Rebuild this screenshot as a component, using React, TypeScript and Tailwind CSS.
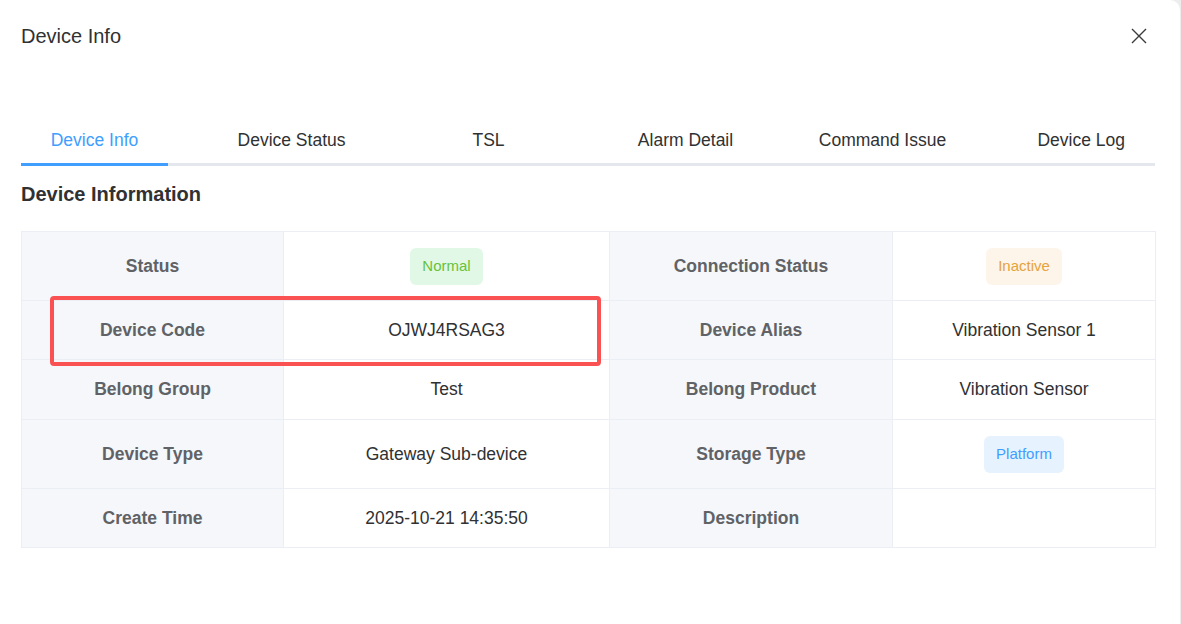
import React from 'react'

const tabs = ['Device Info', 'Device Status', 'TSL', 'Alarm Detail', 'Command Issue', 'Device Log']

function Tag({ children, tone }: { children: React.ReactNode; tone: 'green' | 'orange' | 'blue' }) {
  const cls =
    tone === 'green'
      ? 'bg-[#e2f8e7] text-[#67c23a]'
      : tone === 'orange'
        ? 'bg-[#fdf5ea] text-[#e6a23c]'
        : 'bg-[#e7f2ff] text-[#409eff]'
  return (
    <span className={`inline-flex items-center h-[37px] px-[12px] rounded-[6px] text-[15px] ${cls}`}>
      {children}
    </span>
  )
}

function Label({ children }: { children: React.ReactNode }) {
  return (
    <td className="bg-[#f5f7fa] border border-[#ebeef5] text-center font-bold text-[17.5px] text-[#606266]">
      {children}
    </td>
  )
}

function Value({ children }: { children?: React.ReactNode }) {
  return (
    <td className="bg-white border border-[#ebeef5] text-center text-[17.5px] text-[#303133]">
      {children}
    </td>
  )
}

export default function App() {
  return (
    <div className="w-[1181px] h-[624px] bg-[#ededed] flex font-['Liberation_Sans',Arial,sans-serif]">
      <div className="w-[1180px] h-full bg-white rounded-tr-[10px] px-[21px] pt-[22px]">
        <div className="flex items-center justify-between h-[28px]">
          <h2 className="text-[20px] leading-[28px] text-[#303133]">Device Info</h2>
          <button className="mr-[12px] text-[#3a3a3a]" aria-label="Close">
            <svg width="16" height="16" viewBox="0 0 16 16" fill="none" stroke="currentColor" strokeWidth="1.4">
              <path d="M1 1L15 15M15 1L1 15" />
            </svg>
          </button>
        </div>

        <div className="mt-[67px] w-[1134px] flex h-[49px] border-b-[3px] border-[#e4e7ed] text-[17.5px]">
          <div className="w-[147px] -mb-[3px] border-b-[3px] border-[#409eff] flex items-center justify-center text-[#409eff]">
            {tabs[0]}
          </div>
          <div className="w-[25px]" />
          {tabs.slice(1, 5).map((t) => (
            <div key={t} className="w-[197px] flex items-center justify-center text-[#303133]">
              {t}
            </div>
          ))}
          <div className="flex-1 flex items-center justify-end pr-[30px] text-[#303133]">{tabs[5]}</div>
        </div>

        <h3 className="mt-[15px] text-[20px] leading-[26px] font-bold text-[#303133]">Device Information</h3>

        <div className="relative mt-[24px]">
          <table className="w-[1134px] table-fixed border-collapse">
            <colgroup>
              <col className="w-[262px]" />
              <col className="w-[326px]" />
              <col className="w-[283px]" />
              <col className="w-[263px]" />
            </colgroup>
            <tbody>
              <tr className="h-[69px]">
                <Label>Status</Label>
                <Value>
                  <Tag tone="green">Normal</Tag>
                </Value>
                <Label>Connection Status</Label>
                <Value>
                  <Tag tone="orange">Inactive</Tag>
                </Value>
              </tr>
              <tr className="h-[59px]">
                <Label>Device Code</Label>
                <Value>OJWJ4RSAG3</Value>
                <Label>Device Alias</Label>
                <Value>Vibration Sensor 1</Value>
              </tr>
              <tr className="h-[60px]">
                <Label>Belong Group</Label>
                <Value>Test</Value>
                <Label>Belong Product</Label>
                <Value>Vibration Sensor</Value>
              </tr>
              <tr className="h-[69px]">
                <Label>Device Type</Label>
                <Value>Gateway Sub-device</Value>
                <Label>Storage Type</Label>
                <Value>
                  <Tag tone="blue">Platform</Tag>
                </Value>
              </tr>
              <tr className="h-[59px]">
                <Label>Create Time</Label>
                <Value>2025-10-21 14:35:50</Value>
                <Label>Description</Label>
                <Value />
              </tr>
            </tbody>
          </table>
          {/* highlight annotation */}
          <div className="absolute left-[29px] top-[65px] w-[551px] h-[70px] border-[4px] border-[#fa5252] rounded-[4px] pointer-events-none" />
        </div>
      </div>
    </div>
  )
}
